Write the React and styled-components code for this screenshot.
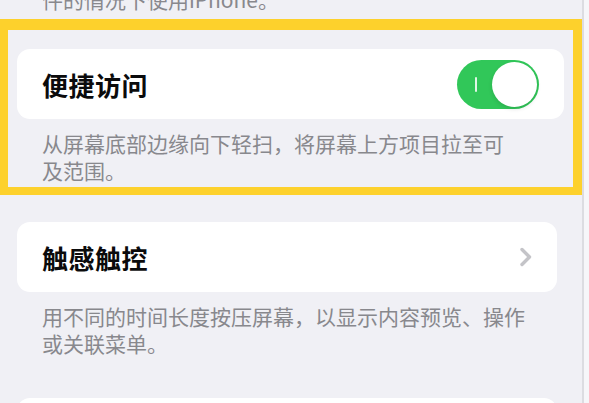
import React, { useState } from "react";
import styled, { createGlobalStyle } from "styled-components";

const GlobalStyle = createGlobalStyle`
  html, body {
    margin: 0;
    padding: 0;
    background: #f6f6f9;
  }
  body {
    font-family: "Noto Sans CJK SC", "Noto Sans", sans-serif;
    overflow: hidden;
  }
`;

const Screen = styled.div`
  width: 582px;
  height: 403px;
  overflow: hidden;
  background: #f0f0f5;
  border-right: 2px solid #dcdce1;
`;

const Section = styled.div`
  padding: 0 25px 0 17px;
`;

const Highlight = styled.div`
  box-sizing: border-box;
  width: 582px;
  margin-top: 6px;
  border-style: solid;
  border-color: #fdd12c;
  border-width: 11px 9px 8px 8px;
  padding: 19px 9px 3px 9px;
`;

const Card = styled.div`
  height: 70px;
  background: #ffffff;
  border-radius: 13px;
  display: flex;
  align-items: center;
  justify-content: space-between;
  padding: 0 24px 0 25px;
`;

const NextCard = styled(Card)`
  margin-top: ${(p) => p.$gap || "0"};
`;

const Title = styled.span`
  font-size: 26px;
  font-weight: 700;
  color: #0b0b0c;
  letter-spacing: 0.5px;
`;

const Note = styled.p`
  margin: ${(p) => (p.$top ? "-14px 0 0" : "11px 0 0")};
  padding: 0 0 0 25px;
  max-width: ${(p) => p.$width || "490px"};
  font-size: 21px;
  line-height: 27px;
  color: #88888d;
`;

const Toggle = styled.button`
  position: relative;
  width: 82px;
  height: 49px;
  border: none;
  padding: 0;
  border-radius: 25px;
  background: ${(p) => (p.$on ? "#31c759" : "#e5e5ea")};
  cursor: pointer;
  margin-right: 1px;
`;

const Knob = styled.span`
  position: absolute;
  top: 2px;
  left: ${(p) => (p.$on ? "35px" : "2px")};
  width: 45px;
  height: 45px;
  border-radius: 50%;
  background: #ffffff;
  box-shadow: 0 2px 4px rgba(0, 0, 0, 0.12);
`;

const OnMark = styled.span`
  position: absolute;
  left: 18px;
  top: 17px;
  width: 2px;
  height: 15px;
  border-radius: 1px;
  background: rgba(255, 255, 255, 0.85);
`;

const Chevron = () => (
  <svg width="14" height="20" viewBox="0 0 14 20" fill="none">
    <path
      d="M3 2.5 L10.5 10 L3 17.5"
      stroke="#c4c4c8"
      strokeWidth="3.4"
      strokeLinecap="round"
      strokeLinejoin="round"
    />
  </svg>
);

export default function App() {
  const [on, setOn] = useState(true);

  return (
    <>
      <GlobalStyle />
      <Screen>
        <Section>
          <Note $top>件的情况下使用iPhone。</Note>
        </Section>
        <Highlight>
          <Card>
            <Title>便捷访问</Title>
            <Toggle $on={on} onClick={() => setOn(!on)} aria-label="便捷访问">
              {on && <OnMark />}
              <Knob $on={on} />
            </Toggle>
          </Card>
          <Note $width="470px">从屏幕底部边缘向下轻扫，将屏幕上方项目拉至可及范围。</Note>
        </Highlight>
        <Section>
          <NextCard $gap="27px">
            <Title>触感触控</Title>
            <Chevron />
          </NextCard>
          <Note>用不同的时间长度按压屏幕，以显示内容预览、操作或关联菜单。</Note>
          <NextCard $gap="41px" />
        </Section>
      </Screen>
    </>
  );
}
